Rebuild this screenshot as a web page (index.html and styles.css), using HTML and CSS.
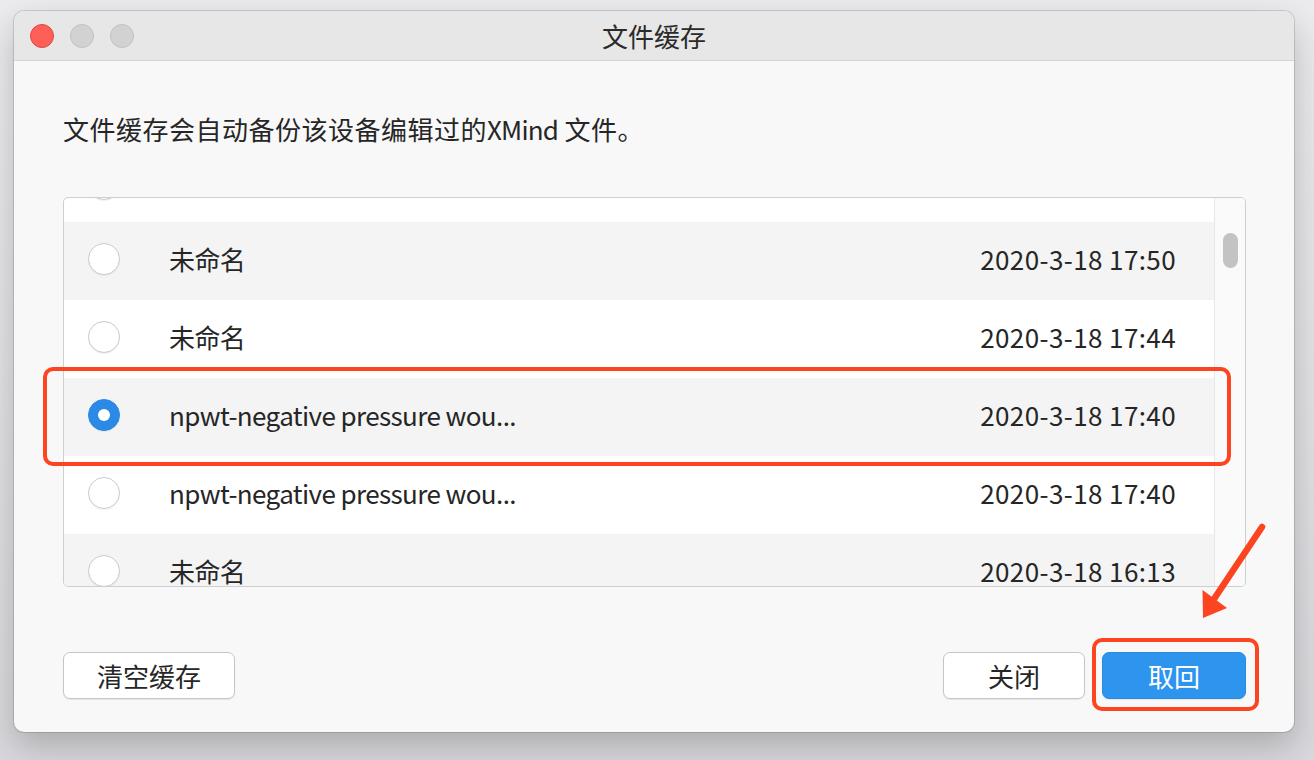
FILE: index.html
```html
<!DOCTYPE html>
<html lang="zh-CN">
<head>
  <meta charset="UTF-8" />
  <title>文件缓存</title>
  <link rel="stylesheet" href="styles.css">
</head>
<body>
  <div class="window">
    <div class="titlebar">
      <div class="lights">
        <span class="light close"></span>
        <span class="light"></span>
        <span class="light"></span>
      </div>
      <div class="title">文件缓存</div>
      <div></div>
    </div>

    <div class="content">
      <p class="desc">文件缓存会自动备份该设备编辑过的<span class="latin">XMind</span> 文件。</p>

      <div class="list-wrap">
        <div class="list">
          <div class="rows">
            <!-- row scrolled mostly out of view -->
            <div class="row partial">
              <span class="radio"></span>
            </div>
            <div class="row">
              <span class="radio"></span>
              <span class="name">未命名</span>
              <span class="time">2020-3-18 17:50</span>
            </div>
            <div class="row">
              <span class="radio"></span>
              <span class="name">未命名</span>
              <span class="time">2020-3-18 17:44</span>
            </div>
            <div class="row">
              <span class="radio checked"></span>
              <span class="name">npwt-negative pressure wou...</span>
              <span class="time">2020-3-18 17:40</span>
            </div>
            <div class="row">
              <span class="radio"></span>
              <span class="name">npwt-negative pressure wou...</span>
              <span class="time">2020-3-18 17:40</span>
            </div>
            <div class="row">
              <span class="radio"></span>
              <span class="name">未命名</span>
              <span class="time">2020-3-18 16:13</span>
            </div>
          </div>
          <div class="scrollbar">
            <div class="thumb"></div>
          </div>
        </div>
        <!-- annotation around the selected row -->
        <div class="mark-row"></div>
      </div>

      <div class="actions">
        <button class="btn wide">清空缓存</button>
        <div class="actions-right">
          <button class="btn">关闭</button>
          <button class="btn primary">取回</button>
        </div>
      </div>
    </div>
  </div>

  <!-- annotation arrow pointing at the primary button -->
  <svg class="arrow" viewBox="0 0 1314 760" width="1314" height="760">
    <line x1="1262" y1="527" x2="1212" y2="602" stroke="#fc4421" stroke-width="6.5" stroke-linecap="round"/>
    <polygon points="1203,618 1202.5,590 1227,608" fill="#fc4421"/>
  </svg>
</body>
</html>
```

FILE: styles.css
```css
body {
  margin: 0;
  padding: 11px 20px 0 14px;
  background: linear-gradient(#ececef, #d9d9dd);
  height: 760px;
  box-sizing: border-box;
  font-family: "Noto Sans CJK SC", "Noto Sans", sans-serif;
  color: #262626;
  position: relative;
  overflow: hidden;
}

.window {
  width: 1280px;
  height: 721px;
  background-color: #f8f8f8;
  border-radius: 10px;
  box-shadow: 0 0 0 1px rgba(0,0,0,0.13), 0 14px 34px rgba(0,0,0,0.22);
  overflow: hidden;
  display: flex;
  flex-direction: column;
}

.titlebar {
  height: 49px;
  flex-shrink: 0;
  background-color: #e7e7e7;
  border-bottom: 1px solid #d5d5d5;
  display: grid;
  grid-template-columns: 1fr auto 1fr;
  align-items: center;
}

.lights {
  display: flex;
  gap: 16px;
  padding-left: 16px;
}

.light {
  width: 22px;
  height: 22px;
  border-radius: 50%;
  background-color: #d2d2d2;
  border: 1px solid #c2c2c2;
}

.light.close {
  background-color: #fe5f57;
  border-color: #e2463f;
}

.title {
  font-size: 26px;
  line-height: 36px;
  color: #2a2a2a;
}

.content {
  padding: 50px 48px 0 49px;
}

.desc {
  margin: 0;
  font-size: 26px;
  line-height: 36px;
  letter-spacing: 0.5px;
}

.desc .latin {
  letter-spacing: -0.8px;
}

.list-wrap {
  position: relative;
  margin-top: 50px;
}

.list {
  height: 390px;
  box-sizing: border-box;
  border: 1px solid #cfcfcf;
  border-radius: 5px;
  background-color: white;
  overflow: hidden;
  display: flex;
}

.rows {
  flex: 1;
  margin-top: -54px;
}

.row {
  height: 78px;
  box-sizing: border-box;
  display: flex;
  align-items: center;
  padding: 0 38px 4px 24px;
  font-size: 26px;
}

.row:nth-child(even) {
  background-color: #f4f4f4;
}

.row.partial .radio {
  margin-top: 6px;
}

.radio {
  width: 30px;
  height: 30px;
  border-radius: 50%;
  background-color: white;
  border: 1.5px solid #cbcbcb;
  box-shadow: 0 1px 1px rgba(0,0,0,0.06);
  flex-shrink: 0;
}

.radio.checked {
  background-color: #2b8ae6;
  border-color: #2b8ae6;
  display: flex;
  align-items: center;
  justify-content: center;
}

.radio.checked::after {
  content: "";
  width: 12px;
  height: 12px;
  border-radius: 50%;
  background-color: white;
}

.name {
  margin-left: 49px;
  flex: 1;
  letter-spacing: -0.6px;
  margin-bottom: 2px;
}

.time {
  letter-spacing: 0.4px;
  margin-bottom: 2px;
}

.scrollbar {
  width: 30px;
  flex-shrink: 0;
  background-color: #fafafa;
  border-left: 1px solid #e8e8e8;
}

.thumb {
  width: 15px;
  height: 35px;
  margin: 35px auto 0;
  border-radius: 8px;
  background-color: #c3c3c3;
}

.mark-row {
  position: absolute;
  top: 170px;
  left: -20px;
  width: 1188px;
  height: 99px;
  box-sizing: border-box;
  border: 4.5px solid #fc4421;
  border-radius: 10px;
}

.actions {
  margin-top: 65px;
  display: flex;
  justify-content: space-between;
}

.actions-right {
  display: flex;
  gap: 17px;
}

.btn {
  height: 47px;
  width: 142px;
  padding: 0;
  font-family: inherit;
  font-size: 26px;
  color: #262626;
  background-color: white;
  border: 1px solid #c6c6c6;
  border-radius: 7px;
  box-shadow: 0 1px 1px rgba(0,0,0,0.08);
}

.btn.wide {
  width: 172px;
}

.btn.primary {
  width: 144px;
  color: white;
  background-color: #2d95ee;
  border-color: #2a8be2;
  position: relative;
}

.btn.primary::after {
  content: "";
  position: absolute;
  top: -15px;
  left: -11px;
  right: -14px;
  bottom: -13px;
  border: 4.5px solid #fc4421;
  border-radius: 10px;
}

.arrow {
  position: absolute;
  top: 0;
  left: 0;
  pointer-events: none;
}
```
